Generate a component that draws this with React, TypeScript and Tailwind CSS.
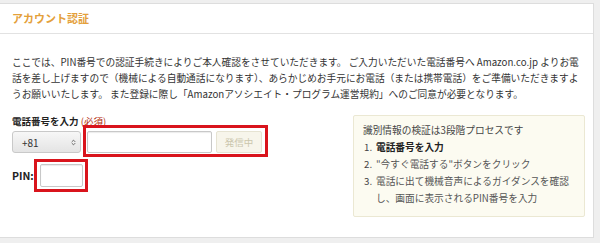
import { ChevronsUpDown } from "lucide-react";

const FONT = "font-['Noto_Sans_CJK_JP','Noto_Sans',sans-serif]";

const STEPS = [
  { n: "1.", text: "電話番号を入力", bold: true },
  { n: "2.", text: "\"今すぐ電話する\"ボタンをクリック", bold: false },
  {
    n: "3.",
    text: "電話に出て機械音声によるガイダンスを確認し、画面に表示されるPIN番号を入力",
    bold: false,
  },
];

const PhoneForm = () => {
  return (
    <div className="flex flex-col">
      <div className="text-[9.5px] leading-[13px] font-bold text-[#222]">
        電話番号を入力 <span className="font-normal text-[#b12704]">(必須)</span>
      </div>

      <div className="flex items-start">
        <div className="mt-[3px] flex h-[22px] w-[69px] items-center justify-between rounded-[3px] border border-[#c9c9c9] bg-gradient-to-b from-[#f7f7f7] to-[#e4e4e4] pr-[3px] pl-[9px] text-[10px] text-[#333]">
          <span>+81</span>
          <ChevronsUpDown className="size-[7px] text-[#555]" strokeWidth={3} />
        </div>

        <div className="ml-[5px] flex gap-[4px] pt-[3px] pr-[3px] pb-[1px] pl-[1px] outline-[3px] outline-solid outline-[#d9141c]">
          <div className="h-[22px] w-[125px] rounded-[2px] border border-[#c8c8c8] bg-white shadow-[inset_0_1px_1px_rgba(0,0,0,0.08)]" />
          <div className="flex h-[22px] w-[46px] items-center justify-center rounded-[2px] border border-[#e6e3d2] bg-[#f7f5eb] text-[9.5px] text-[#cbc6ad]">
            発信中
          </div>
        </div>
      </div>

      <div className="mt-[8px] flex items-center">
        <span className="w-[25px] text-[10.5px] font-bold text-[#222]">PIN:</span>
        <div className="pt-[2px] pr-[2px] pb-[2px] pl-[3px] outline-[3px] outline-solid outline-[#d9141c]">
          <div className="h-[23px] w-[43px] rounded-[2px] border border-[#c8c8c8] bg-white shadow-[inset_0_1px_1px_rgba(0,0,0,0.08)]" />
        </div>
      </div>
    </div>
  );
};

const StepsBox = () => {
  return (
    <div className="ml-auto h-[102px] w-[232px] rounded-[2px] border border-[#ebe8d3] bg-[#fcfbf1] pt-[6px] pr-[8px] pl-[9px] text-[9.7px] leading-[17px]">
      <div className="text-[#444]">識別情報の検証は3段階プロセスです</div>
      <ol>
        {STEPS.map((step) => (
          <li key={step.n} className="flex">
            <span className="w-[13px] shrink-0 pl-[1px] text-[#444]">{step.n}</span>
            <span className={step.bold ? "font-bold text-[#222]" : "text-[#555]"}>
              {step.text}
            </span>
          </li>
        ))}
      </ol>
    </div>
  );
};

export default function App() {
  return (
    <div className={`h-[243px] w-[600px] bg-[#efefef] pt-[3px] pr-[6px] pb-[5px] ${FONT}`}>
      <div className="flex h-full flex-col border border-l-0 border-[#dddddd] bg-white">
        <div className="flex h-[30px] items-center border-b border-[#e2e2e2] px-[12px]">
          <h2 className="text-[11px] font-bold text-[#e4a03a]">アカウント認証</h2>
        </div>

        <div className="pt-[20px] pr-[8px] pl-[12px]">
          <p className="text-[9.7px] leading-[16px] whitespace-nowrap text-[#333]">
            ここでは、PIN番号での認証手続きによりご本人確認をさせていただきます。 ご入力いただいた電話番号へ Amazon.co.jp よりお電
            <br />
            話を差し上げますので（機械による自動通話になります）、あらかじめお手元にお電話（または携帯電話）をご準備いただきますよ
            <br />
            うお願いいたします。 また登録に際し「Amazonアソシエイト・プログラム運営規約」へのご同意が必要となります。
          </p>

          <div className="mt-[13px] flex items-start">
            <PhoneForm />
            <StepsBox />
          </div>
        </div>
      </div>
    </div>
  );
}
